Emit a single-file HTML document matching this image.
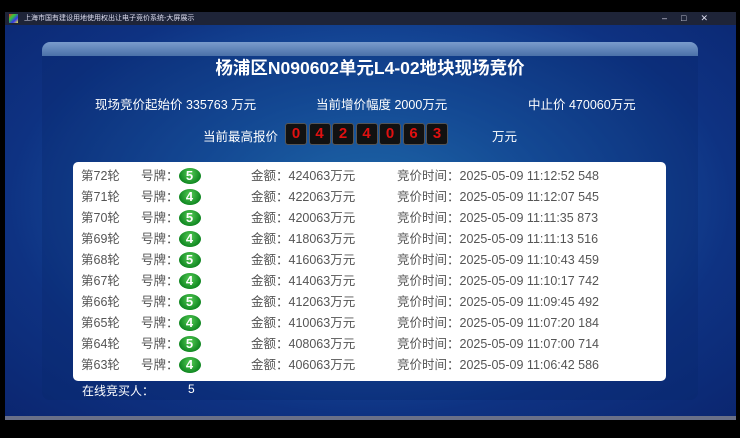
<!DOCTYPE html><html><head><meta charset="utf-8"><style>
*{margin:0;padding:0;box-sizing:border-box}
body{width:740px;height:438px;background:#000;position:relative;overflow:hidden;font-family:"Liberation Sans","Noto Sans CJK SC",sans-serif}
.tb{position:absolute;left:5px;top:12px;width:731px;height:13px;background:#1e2438;color:#dde;font-size:7px;line-height:13px}
.main{position:absolute;left:5px;top:25px;width:731px;height:392px;background:radial-gradient(ellipse at 50% 45%,#2a8ac8 0%,#1a5aa8 35%,#0e3282 70%,#0b2670 100%)}
.strip{position:absolute;left:5px;top:416px;width:731px;height:4px;background:#6a7088}
.panel{position:absolute;left:42px;top:42px;width:656px;height:358px;border-radius:8px;background:rgba(10,40,110,0.35)}
.hl{position:absolute;left:42px;top:42px;width:656px;height:14px;border-radius:8px 8px 0 0;background:linear-gradient(#7a9ccc,#4a70a8)}
.t{position:absolute;color:#fff;white-space:nowrap}
.dg{display:inline-block;width:22px;height:22px;background:#111;border:1px solid #555;border-radius:3px;color:#e01010;font-weight:bold;font-size:15px;text-align:center;line-height:20px;margin-right:1.5px}
.box{position:absolute;left:73px;top:162px;width:593px;height:219px;background:#fff;border-radius:5px}
.r{position:absolute;left:8px;height:21px;font-size:12.5px;color:#555;line-height:21px;white-space:nowrap}
.r span{position:absolute;top:0}
.b{display:inline-block;width:22px;height:16px;border-radius:50%;background:radial-gradient(circle at 50% 35%,#5c5,#182 70%);color:#fff;font-weight:bold;text-align:center;line-height:16px;font-size:13px;margin-top:2px;font-style:normal}
</style></head><body>
<div class="tb"><span style="display:inline-block;width:9px;height:9px;background:linear-gradient(135deg,#e33,#3c3,#33e,#ee3);margin:2px 6px 0 4px;vertical-align:top"></span>上海市国有建设用地使用权出让电子竞价系统-大屏展示<span style="position:absolute;right:14px;font-size:9px;letter-spacing:14px">–□✕</span></div>
<div class="main"></div><div class="strip"></div>
<div class="panel"></div><div class="hl"></div>
<div class="t" style="left:0;width:740px;text-align:center;top:55px;font-size:17.5px;font-weight:bold">杨浦区N090602单元L4-02地块现场竞价</div>
<div class="t" style="left:95px;top:94px;font-size:12.5px">现场竞价起始价 335763 万元</div>
<div class="t" style="left:316px;top:94px;font-size:12.5px">当前增价幅度 2000万元</div>
<div class="t" style="left:528px;top:94px;font-size:12.5px">中止价 470060万元</div>
<div class="t" style="left:203px;top:126px;font-size:12.5px">当前最高报价</div>
<div class="t" style="left:285px;top:123px"><span class="dg">0</span><span class="dg">4</span><span class="dg">2</span><span class="dg">4</span><span class="dg">0</span><span class="dg">6</span><span class="dg">3</span></div>
<div class="t" style="left:492px;top:126px;font-size:12.5px">万元</div>
<div class="box">
<div class="r" style="top:4px"><span style="left:0">第72轮</span><span style="left:60px">号牌：<i class="b">5</i></span><span style="left:170px">金额：424063万元</span><span style="left:316px">竞价时间：2025-05-09 11:12:52 548</span></div>
<div class="r" style="top:25px"><span style="left:0">第71轮</span><span style="left:60px">号牌：<i class="b">4</i></span><span style="left:170px">金额：422063万元</span><span style="left:316px">竞价时间：2025-05-09 11:12:07 545</span></div>
<div class="r" style="top:46px"><span style="left:0">第70轮</span><span style="left:60px">号牌：<i class="b">5</i></span><span style="left:170px">金额：420063万元</span><span style="left:316px">竞价时间：2025-05-09 11:11:35 873</span></div>
<div class="r" style="top:67px"><span style="left:0">第69轮</span><span style="left:60px">号牌：<i class="b">4</i></span><span style="left:170px">金额：418063万元</span><span style="left:316px">竞价时间：2025-05-09 11:11:13 516</span></div>
<div class="r" style="top:88px"><span style="left:0">第68轮</span><span style="left:60px">号牌：<i class="b">5</i></span><span style="left:170px">金额：416063万元</span><span style="left:316px">竞价时间：2025-05-09 11:10:43 459</span></div>
<div class="r" style="top:109px"><span style="left:0">第67轮</span><span style="left:60px">号牌：<i class="b">4</i></span><span style="left:170px">金额：414063万元</span><span style="left:316px">竞价时间：2025-05-09 11:10:17 742</span></div>
<div class="r" style="top:130px"><span style="left:0">第66轮</span><span style="left:60px">号牌：<i class="b">5</i></span><span style="left:170px">金额：412063万元</span><span style="left:316px">竞价时间：2025-05-09 11:09:45 492</span></div>
<div class="r" style="top:151px"><span style="left:0">第65轮</span><span style="left:60px">号牌：<i class="b">4</i></span><span style="left:170px">金额：410063万元</span><span style="left:316px">竞价时间：2025-05-09 11:07:20 184</span></div>
<div class="r" style="top:172px"><span style="left:0">第64轮</span><span style="left:60px">号牌：<i class="b">5</i></span><span style="left:170px">金额：408063万元</span><span style="left:316px">竞价时间：2025-05-09 11:07:00 714</span></div>
<div class="r" style="top:193px"><span style="left:0">第63轮</span><span style="left:60px">号牌：<i class="b">4</i></span><span style="left:170px">金额：406063万元</span><span style="left:316px">竞价时间：2025-05-09 11:06:42 586</span></div>
</div>
<div class="t" style="left:82px;top:382px;font-size:12px">在线竞买人：</div>
<div class="t" style="left:188px;top:382px;font-size:12px">5</div>
</body></html>
